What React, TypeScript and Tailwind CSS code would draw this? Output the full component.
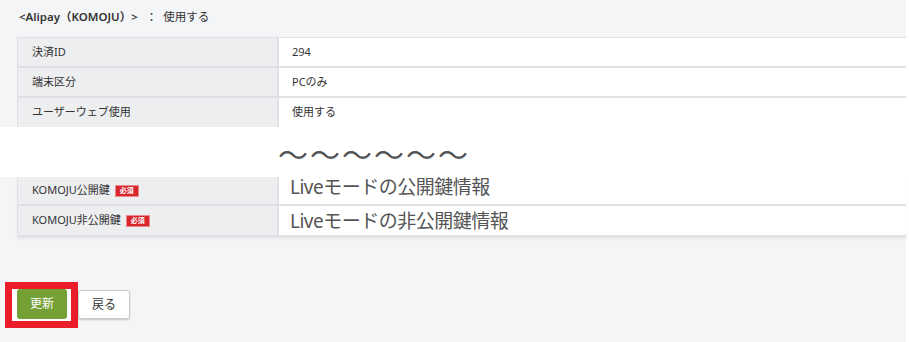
import React from "react";

const jp = { fontFamily: '"Noto Sans", "Noto Sans CJK JP", sans-serif' };

function Badge() {
  return (
    <span className="ml-[6px] inline-flex h-[10px] w-[22px] items-center justify-center bg-[#d8262d] text-[7px] font-bold leading-none text-white outline outline-1 outline-[#e98a8d]">
      必須
    </span>
  );
}

function Row({ label, value, badge, big, h = "h-[30px]", topAlign }: { label: string; value: string; badge?: boolean; big?: boolean; h?: string; topAlign?: boolean }) {
  return (
    <div className={`flex ${h} border-b-2 border-[#dfe1e4]`}>
      <div className="flex w-[261px] shrink-0 items-center border-r-2 border-[#dfe1e4] bg-[#edeef0] pl-[14px] text-[11px] text-[#333]">
        <span>{label}</span>
        {badge && <Badge />}
      </div>
      <div className={`flex flex-1 ${topAlign ? "items-start" : "items-center"} bg-white ${big ? "pl-[11px] text-[19px] leading-[20px] tracking-[-0.5px] text-[#555]" : "pl-[13px] text-[11px] text-[#333]"}`}>
        {value}
      </div>
    </div>
  );
}

export default function App() {
  return (
    <div className="flex h-[342px] w-[909px] bg-white" style={jp}>
      <div className="flex h-full w-[906px] flex-col bg-[#f4f5f7]">
        <div className="flex h-[37px] items-center pb-[4px] pl-[19px] text-[11.5px] text-[#333]">
          <span className="font-semibold">&lt;Alipay（KOMOJU）&gt;</span>
          <span className="ml-[8px]">：</span>
          <span className="ml-[6px]">使用する</span>
        </div>
        <div className="ml-[17px] border-l border-t border-[#dfe1e4]">
          <Row label="決済ID" value="294" />
          <Row label="端末区分" value="PCのみ" />
          <div className="flex h-[29px]">
            <div className="flex w-[261px] shrink-0 items-center border-r-2 border-[#dfe1e4] bg-[#edeef0] pl-[14px] text-[11px] text-[#333]">
              ユーザーウェブ使用
            </div>
            <div className="flex flex-1 items-center bg-white pl-[13px] text-[11px] text-[#333]">使用する</div>
          </div>
        </div>
        <div className="flex h-[50px] items-center bg-white pl-[278px] pt-[6px] text-[30px] leading-none tracking-[2px] text-[#555]">
          〜〜〜〜〜〜
        </div>
        <div className="ml-[17px] border-l border-[#dfe1e4] shadow-[0_2px_2px_rgba(0,0,0,0.06)]">
          <Row label="KOMOJU公開鍵" value="Liveモードの公開鍵情報" badge big h="h-[29px]" topAlign />
          <Row label="KOMOJU非公開鍵" value="Liveモードの非公開鍵情報" badge big h="h-[31px]" />
        </div>
        <div className="ml-[5px] mt-[45px] flex items-start">
          <div className="border-[7px] border-[#ea1d2a] bg-white pb-[2px] pl-[5px] pr-[4px] pt-0">
            <button className="flex h-[30px] w-[50px] items-center justify-center rounded-[3px] bg-[#74a035] text-[12px] text-white">
              更新
            </button>
          </div>
          <button className="mt-[8px] flex h-[29px] w-[52px] items-center justify-center rounded-[3px] border border-[#c9cacc] bg-white text-[12px] text-[#333] shadow-[0_1px_2px_rgba(0,0,0,0.2)]">
            戻る
          </button>
        </div>
      </div>
    </div>
  );
}
